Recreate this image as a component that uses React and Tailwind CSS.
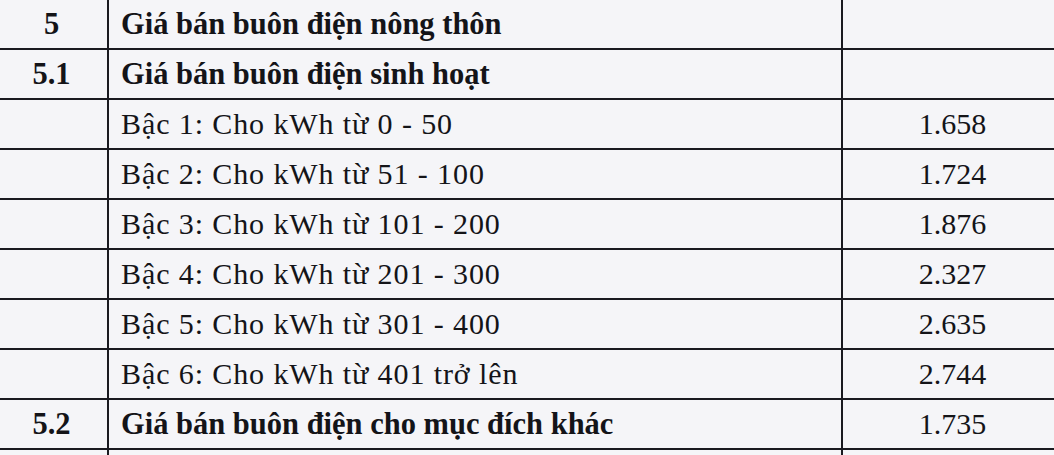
export default function App() {
  const rows = [
    { no: "5", label: "Giá bán buôn điện nông thôn", bold: true, value: "" },
    { no: "5.1", label: "Giá bán buôn điện sinh hoạt", bold: true, value: "" },
    { no: "", label: "Bậc 1: Cho kWh từ 0 - 50", bold: false, value: "1.658" },
    { no: "", label: "Bậc 2: Cho kWh từ 51 - 100", bold: false, value: "1.724" },
    { no: "", label: "Bậc 3: Cho kWh từ 101 - 200", bold: false, value: "1.876" },
    { no: "", label: "Bậc 4: Cho kWh từ 201 - 300", bold: false, value: "2.327" },
    { no: "", label: "Bậc 5: Cho kWh từ 301 - 400", bold: false, value: "2.635" },
    { no: "", label: "Bậc 6: Cho kWh từ 401 trở lên", bold: false, value: "2.744" },
    { no: "5.2", label: "Giá bán buôn điện cho mục đích khác", bold: true, value: "1.735" },
    { no: "", label: "", bold: false, value: "" },
  ];
  return (
    <div
      className="w-[1054px] h-[455px] overflow-hidden bg-[#f5f5f8] text-[#141418]"
      style={{ fontFamily: '"Liberation Serif", "Times New Roman", serif' }}
    >
      <div className="ml-[-4px] w-[1066px] flex flex-col">
        {rows.map((r, i) => (
          <div key={i} className="flex h-[50px] border-b-2 border-[#1a1a20]">
            <div className="w-[113px] shrink-0 border-r-2 border-[#1a1a20] flex items-center justify-center text-[30.5px] font-bold leading-none">
              {r.no}
            </div>
            <div
              className={`w-[734px] shrink-0 border-r-2 border-[#1a1a20] flex items-center pl-[12px] leading-none ${
                r.bold ? "font-bold text-[30.5px]" : "text-[30px] tracking-[0.9px]"
              }`}
            >
              {r.label}
            </div>
            <div className="w-[219px] shrink-0 flex items-center justify-center text-[30px] leading-none">
              {r.value}
            </div>
          </div>
        ))}
      </div>
    </div>
  );
}
